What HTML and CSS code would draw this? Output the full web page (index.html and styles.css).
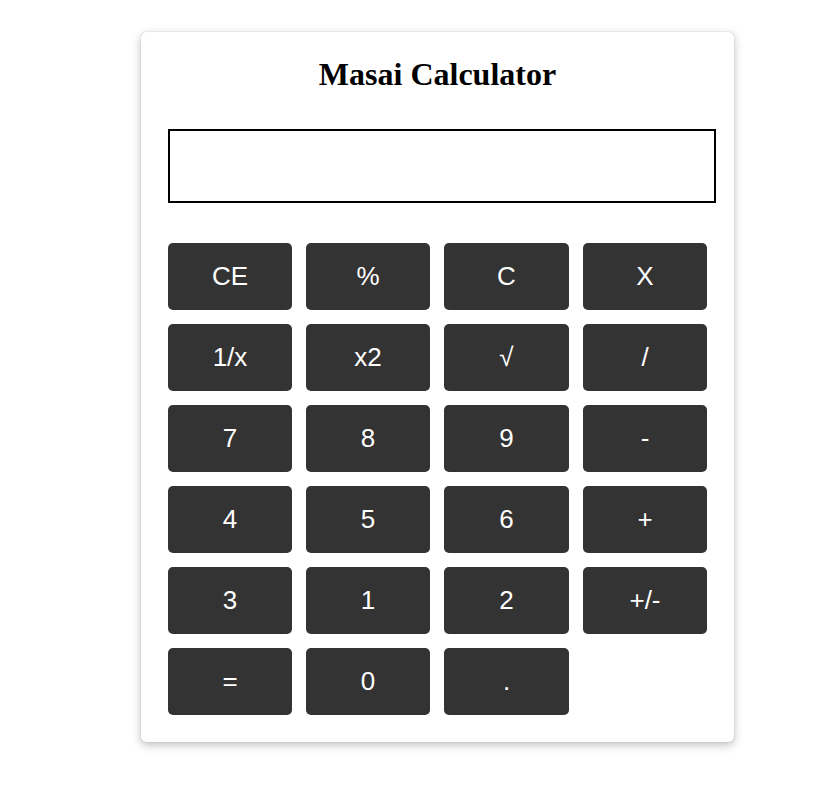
FILE: index.html
```html
<!DOCTYPE html>
<html>
<head>
<meta charset="utf-8">
<link rel="stylesheet" href="styles.css">
</head>
<body>
<div class="calc">
  <h1 class="title">Masai Calculator</h1>
  <input class="display" type="text">
  <div class="keys">
    <button class="key">CE</button>
    <button class="key">%</button>
    <button class="key">C</button>
    <button class="key">X</button>
    <button class="key">1/x</button>
    <button class="key">x2</button>
    <button class="key">√</button>
    <button class="key">/</button>
    <button class="key">7</button>
    <button class="key">8</button>
    <button class="key">9</button>
    <button class="key">-</button>
    <button class="key">4</button>
    <button class="key">5</button>
    <button class="key">6</button>
    <button class="key">+</button>
    <button class="key">3</button>
    <button class="key">1</button>
    <button class="key">2</button>
    <button class="key">+/-</button>
    <button class="key">=</button>
    <button class="key">0</button>
    <button class="key">.</button>
  </div>
</div>
</body>
</html>
```

FILE: styles.css
```css
html, body {
  margin: 0;
  padding: 0;
  background: #fff;
}
body {
  padding: 32px 0 40px 141px;
}
.calc {
  box-sizing: border-box;
  width: 593px;
  padding: 24px 18px 27px 27px;
  background: #fff;
  border-radius: 5px;
  box-shadow: 0 0 1px rgba(0, 0, 0, 0.35), 0 3px 10px rgba(0, 0, 0, 0.25);
}
.title {
  margin: 0 0 0 -9px;
  height: 37px;
  line-height: 37px;
  font-family: "Liberation Serif", "Times New Roman", serif;
  font-size: 32px;
  font-weight: bold;
  text-align: center;
  color: #000;
}
.display {
  display: block;
  box-sizing: border-box;
  width: 548px;
  height: 74px;
  margin: 36px 0 40px 0;
  border: 2px solid #000;
  background: #fff;
  padding: 0;
  outline: none;
}
.keys {
  display: grid;
  grid-template-columns: 124px 124px 125px 124px;
  grid-auto-rows: 67px;
  gap: 14px;
  width: 539px;
}
.key {
  border: none;
  border-radius: 5px;
  background: #333;
  color: #fff;
  font-family: "Liberation Sans", Arial, sans-serif;
  font-size: 26px;
  padding: 0;
}
```
